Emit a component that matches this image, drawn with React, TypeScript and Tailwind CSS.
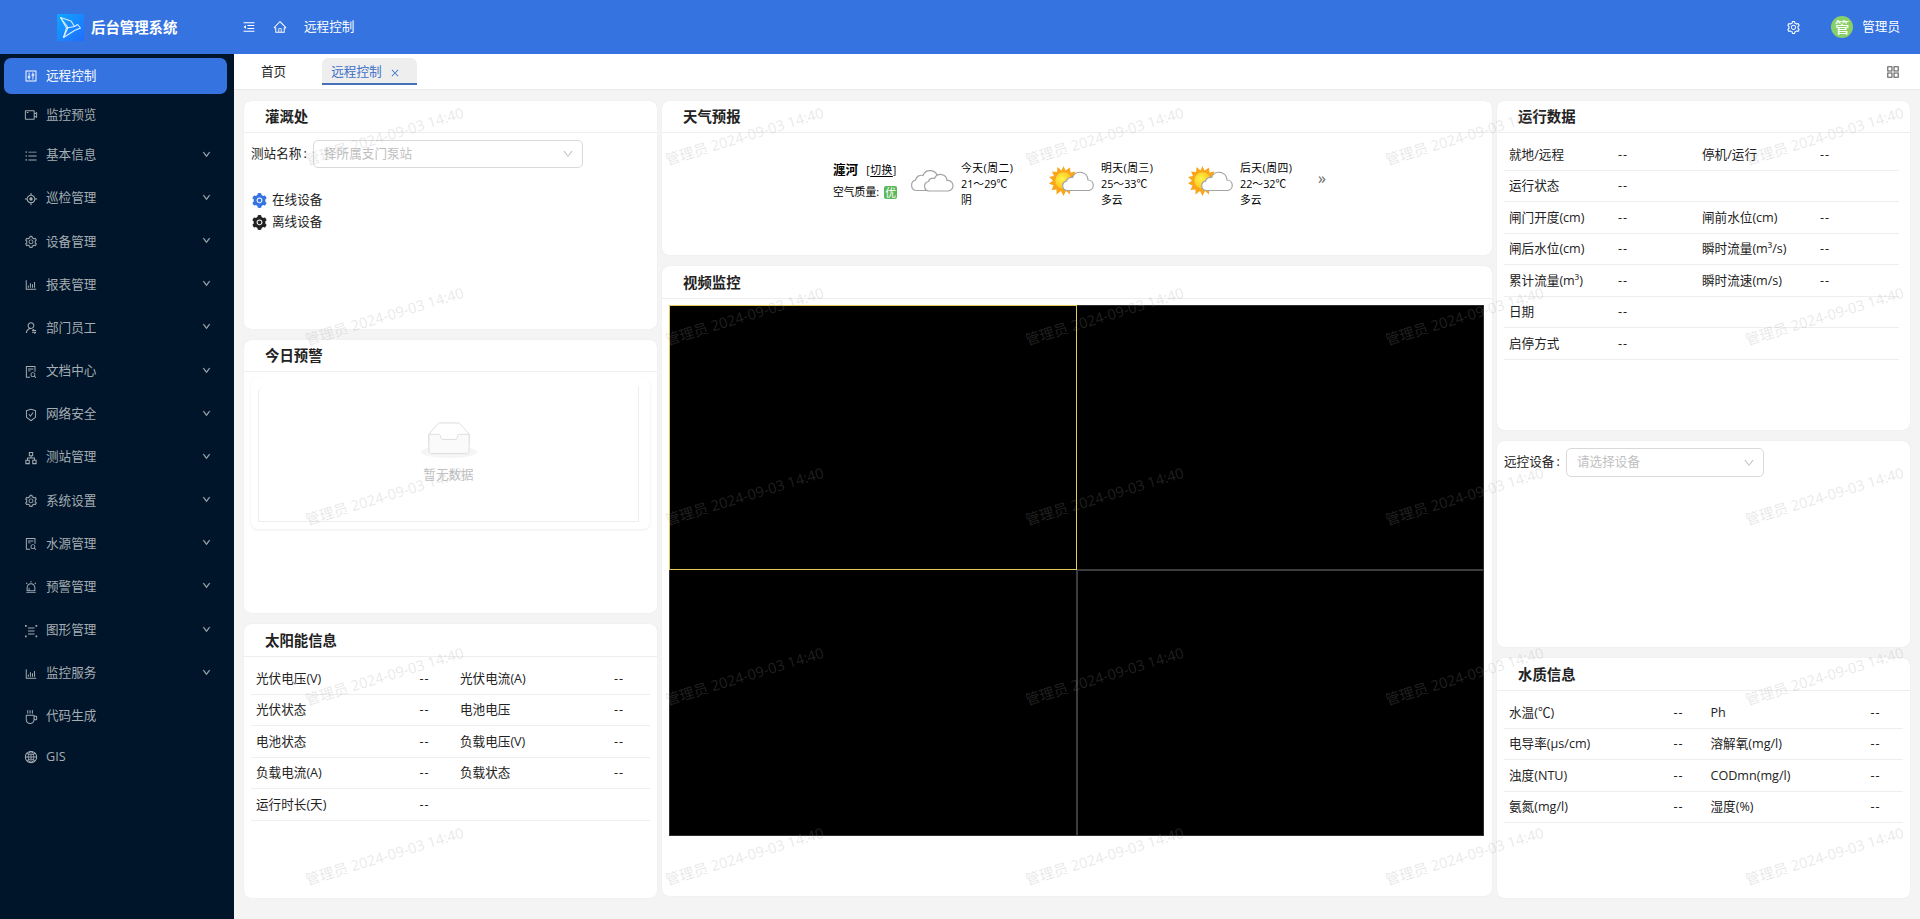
import type { ComponentType, ReactNode } from 'react'
import {
  AiOutlineAlert,
  AiOutlineAim,
  AiOutlineApartment,
  AiOutlineAppstore,
  AiOutlineBarChart,
  AiOutlineClose,
  AiOutlineCoffee,
  AiOutlineControl,
  AiOutlineDown,
  AiOutlineFileSearch,
  AiOutlineGlobal,
  AiOutlineHome,
  AiOutlineMenuFold,
  AiOutlineSafetyCertificate,
  AiOutlineSetting,
  AiOutlineUnorderedList,
  AiOutlineUserSwitch,
  AiOutlineVideoCamera,
  AiFillSetting,
} from 'react-icons/ai'

interface MenuItem {
  label: string
  icon: ComponentType<{ className?: string }>
}

// Corner handles around three bars
function ShapesIcon({ className }: { className?: string }) {
  return (
    <svg className={className} viewBox="0 0 14 14" fill="currentColor">
      <path d="M1 1h1.700v1.700H1zM11.500 1h1.700v1.700h-1.700zM1 11.500h1.700v1.700H1zM11.500 11.500h1.700v1.700h-1.700z" />
      <path d="M4 3.500h6.500v1H4zM4 6.500h6.500v1H4zM4 9.500h6.500v1H4z" />
    </svg>
  )
}

const subMenus: MenuItem[] = [
  { label: '基本信息', icon: AiOutlineUnorderedList },
  { label: '巡检管理', icon: AiOutlineAim },
  { label: '设备管理', icon: AiOutlineSetting },
  { label: '报表管理', icon: AiOutlineBarChart },
  { label: '部门员工', icon: AiOutlineUserSwitch },
  { label: '文档中心', icon: AiOutlineFileSearch },
  { label: '网络安全', icon: AiOutlineSafetyCertificate },
  { label: '测站管理', icon: AiOutlineApartment },
  { label: '系统设置', icon: AiOutlineSetting },
  { label: '水源管理', icon: AiOutlineFileSearch },
  { label: '预警管理', icon: AiOutlineAlert },
  { label: '图形管理', icon: ShapesIcon },
  { label: '监控服务', icon: AiOutlineBarChart },
]

const runRows = [
  ['就地/远程', '停机/运行'],
  ['运行状态'],
  ['闸门开度(cm)', '闸前水位(cm)'],
  ['闸后水位(cm)', '瞬时流量(m³/s)'],
  ['累计流量(m³)', '瞬时流速(m/s)'],
  ['日期'],
  ['启停方式'],
]

const solarRows = [
  ['光伏电压(V)', '光伏电流(A)'],
  ['光伏状态', '电池电压'],
  ['电池状态', '负载电压(V)'],
  ['负载电流(A)', '负载状态'],
  ['运行时长(天)'],
]

const waterRows = [
  ['水温(℃)', 'Ph'],
  ['电导率(μs/cm)', '溶解氧(mg/l)'],
  ['浊度(NTU)', 'CODmn(mg/l)'],
  ['氨氮(mg/l)', '湿度(%)'],
]

function Logo() {
  return (
    <svg className="h-[27px] w-[27px]" viewBox="0 0 27 27" fill="none">
      <defs>
        <linearGradient id="logo" x1="0" y1="0" x2="1" y2="1">
          <stop offset="0" stopColor="#10a5ff" />
          <stop offset="1" stopColor="#1f6dff" />
        </linearGradient>
      </defs>
      <rect width="27" height="27" fill="url(#logo)" />
      <g stroke="#d8f0ff" strokeWidth="1.1" strokeLinejoin="round">
        <path d="M3.500 3.500 14 7 17.500 12.500 9.500 14z" />
        <path d="M9.500 14 6.500 23.500 17.500 16.500 23.500 14 20.500 10.500 17.500 12.500" />
        <path d="M3.500 3.500 11 13.500 6.500 23.500" />
      </g>
    </svg>
  )
}

function Header() {
  return (
    <header className="flex h-[54px] items-center bg-[#3573e0] text-white">
      <div className="flex w-[234px] items-center pl-[57px]">
        <Logo />
        <span className="ml-[7px] pt-[2px] text-[14.4px] font-bold whitespace-nowrap">后台管理系统</span>
      </div>
      <AiOutlineMenuFold className="ml-[8px] h-[14px] w-[14px]" />
      <AiOutlineHome className="ml-[17px] h-[14px] w-[14px]" />
      <span className="ml-[17px]">远程控制</span>
      <div className="ml-auto flex items-center pr-[20px]">
        <AiOutlineSetting className="h-[15px] w-[15px]" />
        <span className="ml-[30px] flex h-[22px] w-[22px] items-center justify-center rounded-full bg-[#87d068] pt-px text-[14.4px] font-medium">
          管
        </span>
        <span className="ml-[9px]">管理员</span>
      </div>
    </header>
  )
}

function Sidebar() {
  return (
    <aside className="w-[234px] shrink-0 bg-[#001529] text-[#a6adb4]">
      <div className="mx-1 mt-1 flex h-9 w-[223px] items-center rounded-[7px] bg-[#3573e0] pl-[20px] text-white">
        <AiOutlineControl className="mr-[8px] h-[14px] w-[14px]" />
        远程控制
      </div>
      <div className="mt-[2px] flex h-[38px] items-center pl-[24px]">
        <AiOutlineVideoCamera className="mr-[8px] h-[14px] w-[14px]" />
        监控预览
      </div>
      {subMenus.map(({ label, icon: Icon }) => (
        <div key={label} className="flex h-[43.2px] items-center pr-[23px] pl-[24px]">
          <Icon className="mr-[8px] h-[14px] w-[14px]" />
          {label}
          <AiOutlineDown className="mb-[3px] ml-auto h-[9px] w-[9px] stroke-[60]" />
        </div>
      ))}
      <div className="flex h-[43px] items-center pl-[24px]">
        <AiOutlineCoffee className="mr-[8px] h-[14px] w-[14px]" />
        代码生成
      </div>
      <div className="flex h-[38px] items-center pl-[24px]">
        <AiOutlineGlobal className="mr-[8px] h-[14px] w-[14px]" />
        GIS
      </div>
    </aside>
  )
}

function TabBar() {
  return (
    <div className="flex h-9 border-b border-[#ebebeb] bg-white">
      <span className="mt-[4px] ml-[27px] leading-[28px]">首页</span>
      <div className="mt-1 ml-[36px] flex h-[27px] w-[95px] items-center rounded-t-[6px] border-b-2 border-[#4571b8] bg-[#eeeeee] pt-[3px] pl-[9px] text-[#3b6fc9]">
        远程控制
        <AiOutlineClose className="mt-[1px] ml-[8px] h-[10px] w-[10px]" />
      </div>
      <AiOutlineAppstore className="mt-[10px] mr-[19px] ml-auto h-4 w-4 text-[#555]" />
    </div>
  )
}

interface CardProps {
  title?: string
  className: string
  children?: ReactNode
}

function Card({ title, className, children }: CardProps) {
  return (
    <section className={`rounded-[7px] bg-white shadow-[0_0_1px_rgba(0,0,0,0.12)] ${className}`}>
      {title && (
        <h2 className="flex h-[32px] items-center border-b border-[#eeeeee] pt-[1px] pl-[21px] text-[14.4px] font-bold">
          {title}
        </h2>
      )}
      {children}
    </section>
  )
}

interface DataRowsProps {
  rows: string[][]
  columns: string
}

function DataRows({ rows, columns }: DataRowsProps) {
  return (
    <div className="mx-[7px] mt-[6px]">
      {rows.map(([first, second]) => (
        <div key={first} className={`grid h-[31.5px] items-center border-b border-[#eeeeee] pt-[2px] pl-[5px] ${columns}`}>
          <span>{first}</span>
          <span className="tracking-[1px]">--</span>
          {second && <span>{second}</span>}
          {second && <span className="tracking-[1px]">--</span>}
        </div>
      ))}
    </div>
  )
}

function Select({ placeholder, className }: { placeholder: string; className: string }) {
  return (
    <div className={`flex items-center rounded-[5px] border border-[#d9d9d9] pr-[8px] pl-[10px] text-[#bfbfbf] ${className}`}>
      {placeholder}
      <AiOutlineDown className="ml-auto h-[12px] w-[12px]" />
    </div>
  )
}

function EmptyBox() {
  return (
    <svg className="h-[36px] w-[56px]" viewBox="0 0 64 41">
      <g transform="translate(0 1)" fill="none" fillRule="evenodd">
        <ellipse fill="#f5f5f5" cx="32" cy="33" rx="32" ry="7" />
        <g fillRule="nonzero" stroke="#d9d9d9">
          <path d="M55 12.76L44.854 1.258C44.367.474 43.656 0 42.907 0H21.093c-.749 0-1.46.474-1.947 1.257L9 12.761V22h46v-9.24z" />
          <path
            d="M41.613 15.931c0-1.605.994-2.93 2.227-2.931H55v18.137C55 33.26 53.68 35 52.05 35h-40.1C10.32 35 9 33.259 9 31.137V13h11.16c1.233 0 2.227 1.323 2.227 2.928v.022c0 1.605 1.005 2.901 2.237 2.901h14.752c1.232 0 2.237-1.308 2.237-2.913v-.007z"
            fill="#fafafa"
          />
        </g>
      </g>
    </svg>
  )
}

function Overcast() {
  return (
    <svg className="h-[30px] w-[46px]" viewBox="0 0 46 30" fill="#fff" stroke="#a3a3a3" strokeWidth="1.2">
      <path d="M7 24.500a5.400 5.400 0 0 1-.5-10.500a6 6 0 0 1 7.500-4.500a7.500 7.500 0 0 1 14.500 2l2 13z" />
      <path d="M20 25a4.800 4.800 0 0 1-.5-9.500a4.500 4.500 0 0 1 6-3a6.500 6.500 0 0 1 12.500 2a5.200 5.200 0 0 1 1.500 10.500z" />
    </svg>
  )
}

function Cloudy() {
  return (
    <svg className="h-[30px] w-[46px]" viewBox="0 0 46 30">
      <defs>
        <radialGradient id="sun" cx="0.4" cy="0.4" r="0.7">
          <stop offset="0" stopColor="#fff34d" />
          <stop offset="1" stopColor="#fbbd12" />
        </radialGradient>
      </defs>
      <path
        fill="#f9a61a"
        d="M14.500 0l2 4.500 4.500-3 .5 5 5-1-2 5 4.500 1.500-4 3 4 3-5 1.500 2 5-5-1 0 5-4-3.500-2.500 5-2.500-5-4.500 3.500v-5l-5 .5 2-4.500-4.500-2 4-3-4-3.500 5-1-2-4.500 5 .5 .5-5 4 3.500z"
      />
      <circle cx="14.500" cy="14.500" r="8.200" fill="url(#sun)" />
      <path
        fill="#fff"
        stroke="#a3a3a3"
        strokeWidth="1.200"
        d="M18 24.500a4.700 4.700 0 0 1-.5-9.300a5 5 0 0 1 6-3.700a8 8 0 0 1 15.500 2.500a5.300 5.300 0 0 1 1 10.500z"
      />
    </svg>
  )
}

function Forecast({ icon, lines }: { icon: ReactNode; lines: string[] }) {
  return (
    <div className="flex">
      <div className="mt-[6px]">{icon}</div>
      <div className="ml-[6px] leading-[16px] whitespace-nowrap">
        {lines.map((line, i) => (
          <div key={line} className={i === 0 ? 'tracking-[0.5px]' : ''}>
            {line}
          </div>
        ))}
      </div>
    </div>
  )
}

function Weather() {
  return (
    <div className="flex pt-[27px] pl-[171px] text-[10.8px] text-black">
      <div className="w-[76px]">
        <div className="flex h-[20px] items-center">
          <b className="text-[12.6px]">瀍河</b>
          <span className="ml-[8px] tracking-[0.5px] whitespace-nowrap">
            [<span className="underline underline-offset-2">切换</span>]
          </span>
        </div>
        <div className="flex h-[24px] items-center whitespace-nowrap">
          空气质量:
          <span className="ml-[5px] h-[13px] w-[13px] rounded-[2px] bg-[#5cb85c] text-center leading-[13px] text-white">优</span>
        </div>
      </div>
      <div className="w-[140px]">
        <Forecast icon={<Overcast />} lines={['今天(周二)', '21～29℃', '阴']} />
      </div>
      <div className="w-[139px]">
        <Forecast icon={<Cloudy />} lines={['明天(周三)', '25～33℃', '多云']} />
      </div>
      <div className="w-[130px]">
        <Forecast icon={<Cloudy />} lines={['后天(周四)', '22～32℃', '多云']} />
      </div>
      <span className="mt-[6px] text-[16px] leading-[24px] text-[#666]">»</span>
    </div>
  )
}

function VideoWall() {
  return (
    <div className="mt-[6px] ml-[7px] grid h-[531px] w-[815px] grid-cols-[408px_1fr] grid-rows-[265px_1fr] bg-black">
      <div className="border border-[#e3cb5a]" />
      <div className="border-t border-r border-b border-[#2e2e2e] border-b-[#3c3c3c]" />
      <div className="border-r border-b border-l border-[#2e2e2e] border-r-[#3c3c3c]" />
      <div className="border-t border-r border-b border-l border-[#2e2e2e] border-t-[#3c3c3c] border-l-[#3c3c3c]" />
    </div>
  )
}

const markColumns = [68, 428, 788, 1148, 1508]
const markRows = [73, 253, 433, 613, 793]

function Watermark() {
  return (
    <div className="pointer-events-none absolute inset-0 overflow-hidden">
      {markRows.map((top) =>
        markColumns.map((left) => (
          <span
            key={`${left}-${top}`}
            className="absolute w-[162px] -rotate-[17deg] text-center text-[14.6px] leading-[18px] whitespace-nowrap text-[rgba(150,150,150,0.22)]"
            style={{ left, top }}
          >
            管理员 2024-09-03 14:40
          </span>
        )),
      )}
    </div>
  )
}

export default function App() {
  return (
    <div className="flex h-[919px] w-[1920px] flex-col overflow-hidden bg-[#f4f4f4] font-['Open_Sans','Noto_Sans_CJK_SC',sans-serif] text-[12.6px] text-[#222]">
      <Header />
      <div className="flex min-h-0 flex-1">
        <Sidebar />
        <main className="relative flex-1">
          <TabBar />
          <div className="flex gap-[5px] pt-[11px] pl-[10px]">
            {/* Left column */}
            <div className="flex w-[413px] flex-col gap-[11px]">
              <Card title="灌溉处" className="h-[228px]">
                <div className="mt-[7px] flex items-center pl-[7px]">
                  <span className="w-[62px] whitespace-nowrap">
                    测站名称<span className="ml-[2px]">:</span>
                  </span>
                  <Select placeholder="择所属支门泵站" className="h-[28px] w-[270px]" />
                </div>
                <div className="mt-[21px] pl-[7px]">
                  <div className="flex h-[22px] items-center">
                    <AiFillSetting className="mr-[4px] h-[17px] w-[17px] text-[#3573e0]" />
                    在线设备
                  </div>
                  <div className="flex h-[23px] items-center">
                    <AiFillSetting className="mr-[4px] h-[17px] w-[17px]" />
                    离线设备
                  </div>
                </div>
              </Card>
              <Card title="今日预警" className="h-[273px]">
                <div className="mx-[7px] mt-[6px] h-[151px] rounded-[7px] pt-[8px] pl-[7px] shadow-[0_1px_3px_rgba(0,0,0,0.08)]">
                  <div className="flex h-[136px] w-[381px] flex-col items-center rounded-tl-[7px] border border-t-0 border-[#eeeeee] pt-[36px] text-[#bfbfbf]">
                    <EmptyBox />
                    <span className="mt-[8px]">暂无数据</span>
                  </div>
                </div>
              </Card>
              <Card title="太阳能信息" className="h-[274px] [&>h2]:h-[33px]">
                <DataRows rows={solarRows} columns="grid-cols-[163.5px_40.5px_154px_1fr]" />
              </Card>
            </div>

            {/* Middle column */}
            <div className="flex w-[830px] flex-col gap-[11px]">
              <Card title="天气预报" className="h-[154px]">
                <Weather />
              </Card>
              <Card title="视频监控" className="h-[630px] [&>h2]:h-[33px]">
                <VideoWall />
              </Card>
            </div>

            {/* Right column */}
            <div className="flex w-[413px] flex-col gap-[11px]">
              <Card title="运行数据" className="h-[329px]">
                <div className="mr-[4px]">
                  <DataRows rows={runRows} columns="grid-cols-[109px_84px_118px_1fr]" />
                </div>
              </Card>
              <Card className="h-[206px] pt-[7px]">
                <div className="flex items-center pl-[7px]">
                  <span className="w-[62px] whitespace-nowrap">
                    远控设备<span className="ml-[2px]">:</span>
                  </span>
                  <Select placeholder="请选择设备" className="h-[29px] w-[198px]" />
                </div>
              </Card>
              <Card title="水质信息" className="h-[240px] [&>h2]:h-[33px]">
                <DataRows rows={waterRows} columns="grid-cols-[164.5px_37px_160px_1fr]" />
              </Card>
            </div>
          </div>
          <Watermark />
        </main>
      </div>
    </div>
  )
}
